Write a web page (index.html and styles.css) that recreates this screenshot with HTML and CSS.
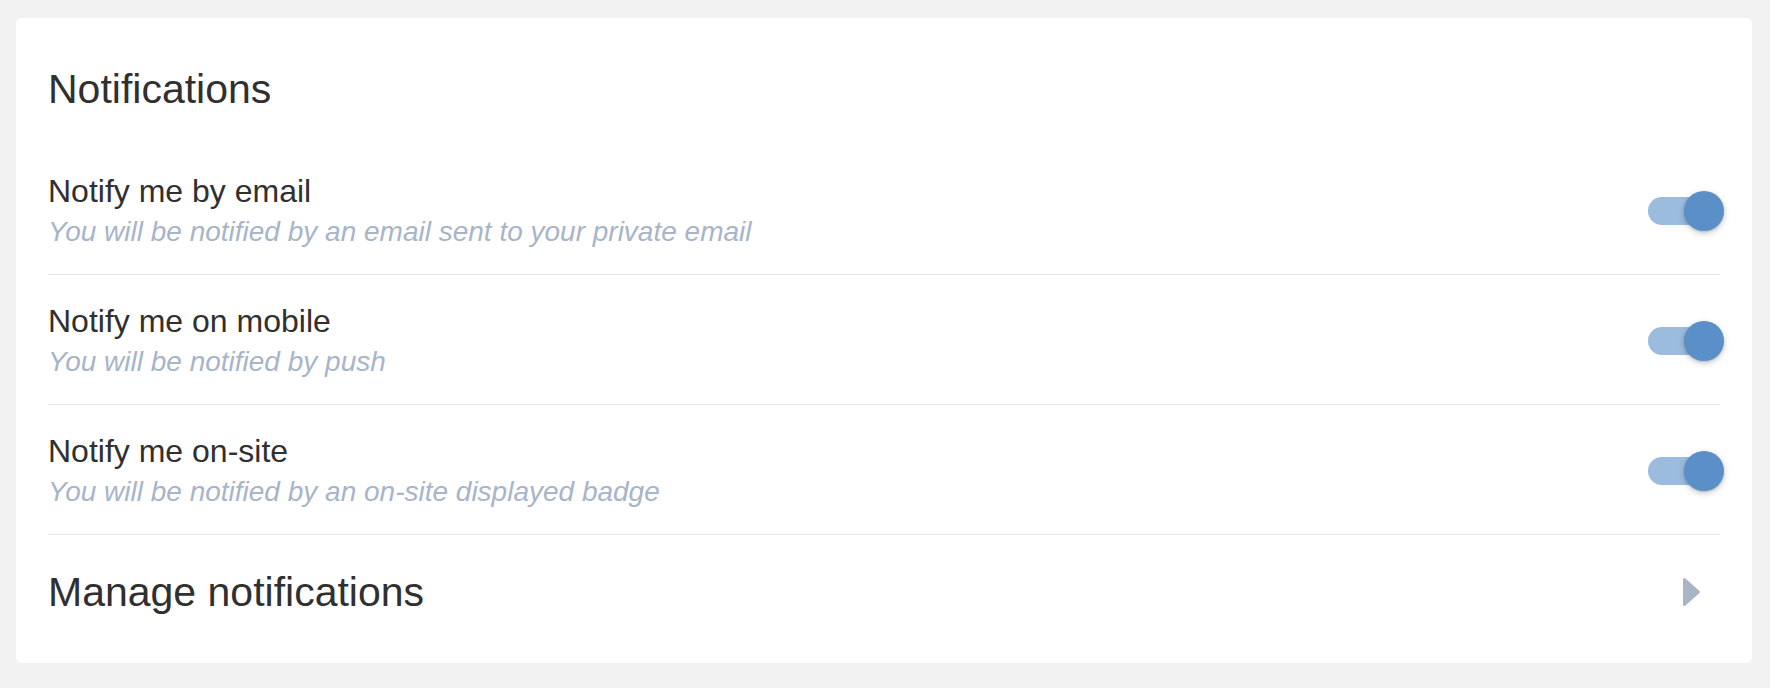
FILE: index.html
```html
<!DOCTYPE html>
<html lang="en">
<head>
<meta charset="utf-8">
<title>Notifications</title>
<link rel="stylesheet" href="styles.css">
</head>
<body>
  <section class="card">
    <h1 class="card-title">Notifications</h1>
    <ul class="settings">
      <li class="setting">
        <div class="setting-text">
          <div class="setting-label">Notify me by email</div>
          <div class="setting-desc">You will be notified by an email sent to your private email</div>
        </div>
        <span class="switch" role="switch" aria-checked="true"><span class="track"></span><span class="knob"></span></span>
      </li>
      <li class="setting">
        <div class="setting-text">
          <div class="setting-label">Notify me on mobile</div>
          <div class="setting-desc">You will be notified by push</div>
        </div>
        <span class="switch" role="switch" aria-checked="true"><span class="track"></span><span class="knob"></span></span>
      </li>
      <li class="setting">
        <div class="setting-text">
          <div class="setting-label">Notify me on-site</div>
          <div class="setting-desc">You will be notified by an on-site displayed badge</div>
        </div>
        <span class="switch" role="switch" aria-checked="true"><span class="track"></span><span class="knob"></span></span>
      </li>
      <li class="manage">
        <span class="manage-label">Manage notifications</span>
        <svg class="chevron" width="20" height="32" viewBox="0 0 20 32" aria-hidden="true">
          <path d="M3.5 3.5 L17.5 16 L3.5 28.5 Z" fill="#a9b5c6" stroke="#a9b5c6" stroke-width="3" stroke-linejoin="round"/>
        </svg>
      </li>
    </ul>
  </section>
</body>
</html>
```

FILE: styles.css
```css
* { box-sizing: border-box; }

html, body {
  margin: 0;
  background: #f2f2f2;
}

body {
  padding: 18px 18px 0 16px;
  font-family: "Liberation Sans", Arial, Helvetica, sans-serif;
  color: #303030;
}

.card {
  background: #ffffff;
  border-radius: 6px;
  padding: 16px 32px 16px 32px;
}

.card-title {
  margin: 0;
  padding: 31px 0 32px;
  font-size: 41px;
  line-height: 48px;
  font-weight: normal;
  color: #303030;
}

.settings {
  list-style: none;
  margin: 0;
  padding: 0;
}

.setting {
  display: flex;
  align-items: center;
  justify-content: space-between;
  padding: 26px 0 24px;
  border-bottom: 1px solid #e0e6ee;
}

.setting-text {
  display: flex;
  flex-direction: column;
}

.setting-label {
  font-size: 32px;
  line-height: 40px;
  color: #303030;
}

.setting-desc {
  margin-top: 3px;
  font-size: 28px;
  line-height: 36px;
  font-style: italic;
  color: #a7b5c9;
}

.switch {
  position: relative;
  display: flex;
  align-items: center;
  width: 76px;
  height: 40px;
  margin-right: -4px;
  flex-shrink: 0;
}

.track {
  width: 64px;
  height: 28px;
  border-radius: 14px;
  background: #9cbcde;
}

.knob {
  position: absolute;
  right: 0;
  top: 0;
  width: 40px;
  height: 40px;
  border-radius: 50%;
  background: #5a8fc8;
  box-shadow: 0 2px 6px rgba(0, 0, 0, 0.22), 0 1px 2px rgba(0, 0, 0, 0.12);
}

.manage {
  display: flex;
  align-items: center;
  justify-content: space-between;
  padding: 33px 0 31px;
}

.manage-label {
  font-size: 41px;
  line-height: 48px;
  color: #303030;
}

.chevron {
  display: block;
  margin-right: 19px;
}
```
